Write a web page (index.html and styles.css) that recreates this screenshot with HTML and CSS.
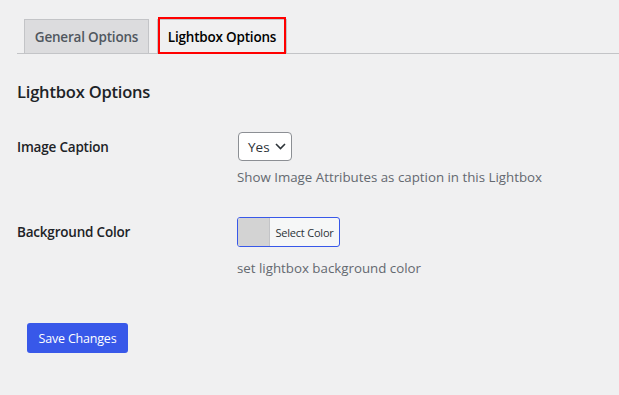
FILE: index.html
```html
<!DOCTYPE html>
<html lang="en">
<head>
<meta charset="utf-8">
<title>Lightbox Options</title>
<link rel="stylesheet" href="styles.css">
</head>
<body>
<div class="wrap">
  <nav class="tabs">
    <a class="tab">General Options</a>
    <a class="tab tab-active">Lightbox Options</a>
  </nav>
  <h2 class="title">Lightbox Options</h2>
  <div class="row row-caption">
    <div class="label">Image Caption</div>
    <div class="field">
      <div class="select">
        <span>Yes</span>
        <svg class="chev" width="11" height="7" viewBox="0 0 11 7"><path d="M1 1l4.5 4.5L10 1" fill="none" stroke="#2c3338" stroke-width="1.6"/></svg>
      </div>
      <p class="desc desc-caption">Show Image Attributes as caption in this Lightbox</p>
    </div>
  </div>
  <div class="row row-color">
    <div class="label">Background Color</div>
    <div class="field">
      <div class="color-btn">
        <span class="swatch"></span>
        <span class="color-text">Select Color</span>
      </div>
      <p class="desc desc-color">set lightbox background color</p>
    </div>
  </div>
  <div class="submit">
    <button class="save">Save Changes</button>
  </div>
</div>
</body>
</html>
```
FILE: styles.css
```css
html, body {
  margin: 0;
  padding: 0;
  background: #f0f0f1;
  font-family: "Open Sans", "Noto Sans", sans-serif;
  color: #1d2327;
}
.wrap {
  padding-left: 17px;
}
.tabs {
  display: flex;
  margin-top: 19px;
  padding-left: 7px;
  border-bottom: 1px solid #c3c4c7;
  height: 34px;
  box-sizing: content-box;
  gap: 8px;
}
.tab {
  position: relative;
  display: flex;
  align-items: center;
  justify-content: center;
  height: 34px;
  box-sizing: border-box;
  border: 1px solid #c3c4c7;
  border-bottom: none;
  background: #dcdcde;
  color: #50575e;
  font-size: 13.5px;
  font-weight: 600;
  width: 125px;
  letter-spacing: -0.2px;
}
.tab-active {
  background: #f0f0f1;
  color: #000;
  width: 130px;
  margin-bottom: -1px;
  height: 35px;
}
.tab-active::after {
  content: "";
  position: absolute;
  top: -3px;
  left: 0;
  right: 0;
  bottom: 0;
  border: 2px solid #ff0000;
}
.title {
  margin: 26px 0 0;
  font-size: 16.5px;
  line-height: 24px;
  font-weight: 600;
  letter-spacing: -0.2px;
  height: 24px;
}
.row {
  display: flex;
}
.row-caption {
  margin-top: 28px;
}
.row-color {
  margin-top: 30px;
}
.label {
  width: 220px;
  font-size: 13.5px;
  font-weight: 600;
  line-height: 20px;
  padding-top: 5px;
  letter-spacing: -0.2px;
}
.field {
  display: flex;
  flex-direction: column;
  align-items: flex-start;
}
.select {
  display: flex;
  align-items: center;
  box-sizing: border-box;
  width: 54px;
  height: 29px;
  margin-left: 1px;
  padding-left: 9px;
  gap: 5px;
  background: #fff;
  border: 1px solid #8c8f94;
  border-radius: 4px;
  font-size: 13.5px;
  color: #2c3338;
}
.chev {
  display: block;
}
.desc {
  margin: 0;
  font-size: 13.3px;
  line-height: 20px;
  color: #646970;
}
.desc-caption {
  margin-top: 6px;
}
.desc-color {
  margin-top: 11px;
}
.color-btn {
  display: flex;
  box-sizing: border-box;
  width: 103px;
  height: 30px;
  border: 1px solid #3858e9;
  border-radius: 3px;
  overflow: hidden;
  background: #f6f7f7;
}
.swatch {
  width: 31px;
  background: #d3d3d3;
  border-right: 1px solid #c3c4c7;
}
.color-text {
  flex: 1;
  display: flex;
  align-items: center;
  justify-content: center;
  font-size: 11px;
  color: #2c3338;
  letter-spacing: -0.2px;
}
.submit {
  margin-top: 45px;
  padding-left: 10px;
}
.save {
  display: block;
  width: 101px;
  height: 30px;
  background: #3858e9;
  border: none;
  border-radius: 3px;
  color: #fff;
  font-family: "Open Sans", "Noto Sans", sans-serif;
  font-size: 12.5px;
  padding: 0;
  letter-spacing: -0.2px;
}
```
